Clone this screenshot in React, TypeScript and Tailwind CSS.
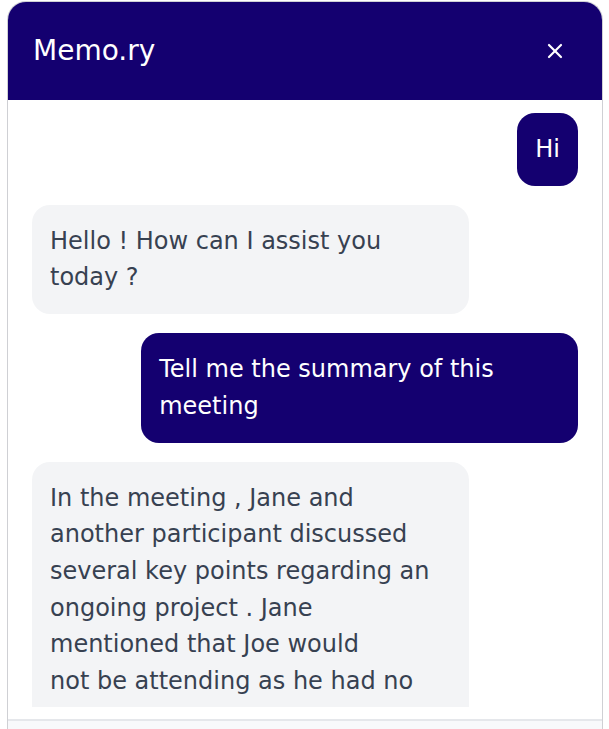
import { X } from "lucide-react";

type Msg = { from: "user" | "bot"; text: React.ReactNode };

const MESSAGES: Msg[] = [
  { from: "user", text: "Hi" },
  { from: "bot", text: "Hello ! How can I assist you today ?" },
  { from: "user", text: "Tell me the summary of this meeting" },
  {
    from: "bot",
    text: (
      <>
        In the meeting , Jane and another participant discussed several key points regarding an
        ongoing project . Jane
        <br />
        mentioned that Joe would
        <br />
        not be attending as he had no updates to share . They also reviewed the timeline and agreed
        to follow up next week .
      </>
    ),
  },
];

export default function App() {
  return (
    <div
      className="h-[729px] overflow-hidden bg-white pt-px"
      style={{ fontFamily: '"DejaVu Sans", "Liberation Sans", sans-serif' }}
    >
      <div className="ml-[7px] flex h-[728px] w-[596px] flex-col overflow-hidden rounded-t-[19px] border border-b-0 border-[#cfd0d4] bg-white">
        {/* Header */}
        <div className="flex h-[98px] shrink-0 items-center justify-between bg-[#140070] pl-[25px] pr-[35px]">
          <h1 className="text-[28px] font-normal text-white">Memo.ry</h1>
          <button className="text-white">
            <X size={24} strokeWidth={2.2} />
          </button>
        </div>

        {/* Messages */}
        <div className="flex h-[607px] shrink-0 flex-col gap-[19px] overflow-hidden px-[24px] pt-[13px]">
          {MESSAGES.map((m, i) => (
            <div key={i} className={`flex ${m.from === "user" ? "justify-end" : "justify-start"}`}>
              <div
                className={`max-w-[80%] rounded-[18px] px-[18px] py-[18px] text-[24px] leading-[36.7px] ${
                  m.from === "user" ? "bg-[#140070] text-white" : "bg-[#f3f4f6] text-[#374151]"
                }`}
              >
                {m.text}
              </div>
            </div>
          ))}
        </div>

        <div className="h-[12px] shrink-0" />

        {/* Input area */}
        <div className="flex-1 border-t-2 border-[#e5e7eb] bg-[#f8f9fb]" />
      </div>
    </div>
  );
}
